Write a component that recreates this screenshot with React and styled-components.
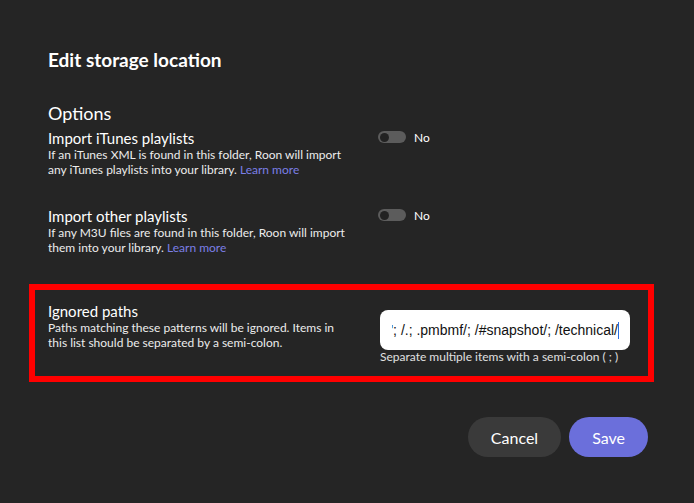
import React from "react";
import styled, { createGlobalStyle } from "styled-components";

const Global = createGlobalStyle`
  html, body { margin: 0; padding: 0; background: #252525; }
  body { font-family: Lato, "Noto Sans", sans-serif; color: #fff; }
`;

const Dialog = styled.div`
  width: 694px;
  height: 503px;
  box-sizing: border-box;
  padding: 48px 46px 0 48px;
  background: #252525;
  display: flex;
  flex-direction: column;
`;

const Title = styled.h1`
  margin: 0;
  font-size: 19px;
  line-height: 23px;
  font-weight: 700;
  color: #fff;
`;

const SectionTitle = styled.h2`
  margin: 31px 0 0;
  font-size: 18px;
  line-height: 22px;
  font-weight: 400;
  color: #fff;
`;

const Row = styled.div`
  display: grid;
  grid-template-columns: 302px 1fr;
  column-gap: ${(p) => p.$gap ?? 28}px;
  margin-top: ${(p) => p.$top}px;
`;

const Info = styled.div`
  display: flex;
  flex-direction: column;
`;

const Label = styled.div`
  font-size: 15px;
  line-height: 18px;
  color: #fff;
`;

const Desc = styled.div`
  font-size: 12px;
  line-height: 15px;
  color: #ececec;
`;

const Link = styled.a`
  color: #7b7fe6;
  text-decoration: none;
`;

const Control = styled.div`
  display: flex;
  align-items: center;
  gap: 8px;
  height: 16px;
  align-self: start;
`;

const Track = styled.div`
  width: 28px;
  height: 12px;
  border-radius: 6px;
  background: #5c5c5c;
  display: flex;
  align-items: center;
  padding: 0 2px;
  box-sizing: border-box;
`;

const Knob = styled.div`
  width: 9px;
  height: 9px;
  border-radius: 50%;
  background: #222;
`;

const ToggleText = styled.span`
  font-size: 12px;
  color: #fff;
`;

const Highlight = styled.div`
  margin: 29px -6px 0 -19px;
  border: 6px solid #ff0000;
  padding: 12px 18px 12px 13px;
`;

const InputCol = styled.div`
  display: flex;
  flex-direction: column;
  padding-top: 8px;
`;

const FakeInput = styled.div`
  width: 250px;
  height: 40px;
  box-sizing: border-box;
  background: #fff;
  border-radius: 8px;
  padding: 0 11px 0 12px;
  display: flex;
  align-items: center;
`;

const InputText = styled.div`
  flex: 1;
  min-width: 0;
  display: flex;
  align-items: center;
  justify-content: flex-end;
  overflow: hidden;
  white-space: nowrap;
  font-family: "Liberation Sans", Arial, sans-serif;
  font-size: 14px;
  color: #111;
`;

const Caret = styled.span`
  display: inline-block;
  width: 1px;
  height: 17px;
  background: #2a6fe0;
  flex-shrink: 0;
`;

const Help = styled.div`
  font-size: 12px;
  line-height: 15px;
  color: #e0e0e0;
  margin-top: -1px;
`;

const Footer = styled.div`
  display: flex;
  justify-content: flex-end;
  gap: 8px;
  margin-top: 35px;
`;

const Button = styled.button`
  height: 40px;
  border: none;
  border-radius: 20px;
  padding: 0 ${(p) => p.$pad}px;
  font-family: Lato, "Noto Sans", sans-serif;
  font-size: 16px;
  color: #fff;
  background: ${(p) => (p.$primary ? "#6b6fdb" : "#3a3a3a")};
  cursor: pointer;
`;

function Toggle() {
  return (
    <Control>
      <Track>
        <Knob />
      </Track>
      <ToggleText>No</ToggleText>
    </Control>
  );
}

export default function App() {
  return (
    <>
      <Global />
      <Dialog>
        <Title>Edit storage location</Title>
        <SectionTitle>Options</SectionTitle>
        <Row $top={5}>
          <Info>
            <Label>Import iTunes playlists</Label>
            <Desc>
              If an iTunes XML is found in this folder, Roon will import any iTunes playlists into your library.{" "}
              <Link href="#">Learn more</Link>
            </Desc>
          </Info>
          <Toggle />
        </Row>
        <Row $top={30}>
          <Info>
            <Label>Import other playlists</Label>
            <Desc>
              If any M3U files are found in this folder, Roon will import them into your library.{" "}
              <Link href="#">Learn more</Link>
            </Desc>
          </Info>
          <Toggle />
        </Row>
        <Highlight>
          <Row $top={0} $gap={30}>
            <Info>
              <Label>Ignored paths</Label>
              <Desc>
                Paths matching these patterns will be ignored. Items in this list should be separated by a semi-colon.
              </Desc>
            </Info>
            <InputCol>
              <FakeInput>
                <InputText>
                  <span>@eaDir/'; /.; .pmbmf/; /#snapshot/; /technical/</span>
                  <Caret />
                </InputText>
              </FakeInput>
              <Help>Separate multiple items with a semi-colon ( ; )</Help>
            </InputCol>
          </Row>
        </Highlight>
        <Footer>
          <Button $pad={23}>Cancel</Button>
          <Button $primary $pad={23}>Save</Button>
        </Footer>
      </Dialog>
    </>
  );
}
